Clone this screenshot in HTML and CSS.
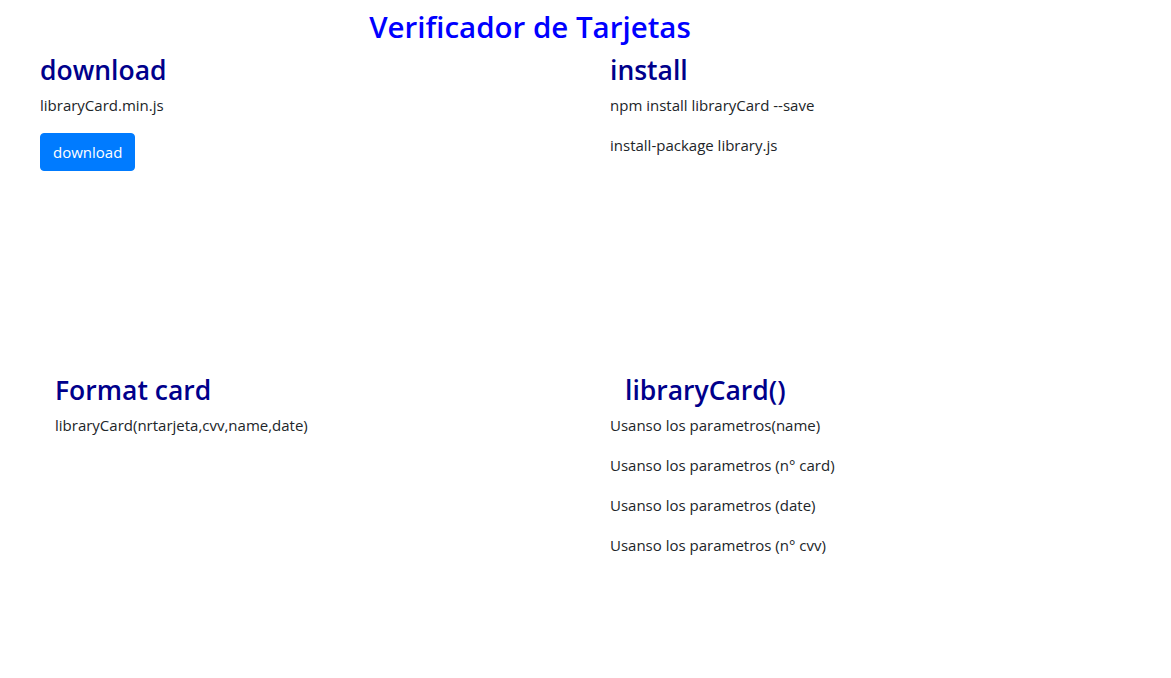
FILE: index.html
```html
<!DOCTYPE html>
<html lang="es">
<head>
<meta charset="utf-8">
<title>Verificador de Tarjetas</title>
<link rel="stylesheet" href="styles.css">
</head>
<body>
<header class="header">
  <h2 class="title">Verificador de Tarjetas</h2>
</header>
<section class="row row-top">
  <div class="col">
    <h3 class="heading">download</h3>
    <p class="text">libraryCard.min.js</p>
    <button class="btn">download</button>
  </div>
  <div class="col">
    <h3 class="heading">install</h3>
    <p class="text">npm install libraryCard --save</p>
    <p class="text">install-package library.js</p>
  </div>
</section>
<section class="row row-bottom">
  <div class="col col-indent">
    <h3 class="heading">Format card</h3>
    <p class="text">libraryCard(nrtarjeta,cvv,name,date)</p>
  </div>
  <div class="col">
    <h3 class="heading heading-indent">libraryCard()</h3>
    <p class="text">Usanso los parametros(name)</p>
    <p class="text">Usanso los parametros (n° card)</p>
    <p class="text">Usanso los parametros (date)</p>
    <p class="text">Usanso los parametros (n° cvv)</p>
  </div>
</section>
</body>
</html>
```
FILE: styles.css
```css
* { box-sizing: border-box; }
body {
  margin: 0;
  font-family: "Open Sans", "Noto Sans", sans-serif;
  font-size: 15px;
  line-height: 24px;
  color: #212529;
  background: #fff;
}
.header {
  width: 1060px;
  text-align: center;
  padding-top: 9px;
}
.title {
  margin: 0;
  font-size: 29.5px;
  font-weight: 600;
  line-height: 1.2;
  color: #0000ff;
}
.row {
  display: grid;
  grid-template-columns: 570px 570px;
  padding-left: 40px;
}
.row-top {
  height: 331px;
  padding-top: 11px;
}
.col-indent { padding-left: 15px; }
.heading {
  margin: 0 0 6px;
  font-size: 26.5px;
  font-weight: 600;
  line-height: 1.2;
  color: #00008b;
}
.heading-indent { padding-left: 15px; }
.text {
  margin: 0 0 16px;
}
.btn {
  display: block;
  height: 38px;
  padding: 0 12px;
  border: 1px solid #007bff;
  border-radius: 4px;
  background: #007bff;
  color: #fff;
  font-family: inherit;
  font-size: 15px;
  line-height: 24px;
}
```
